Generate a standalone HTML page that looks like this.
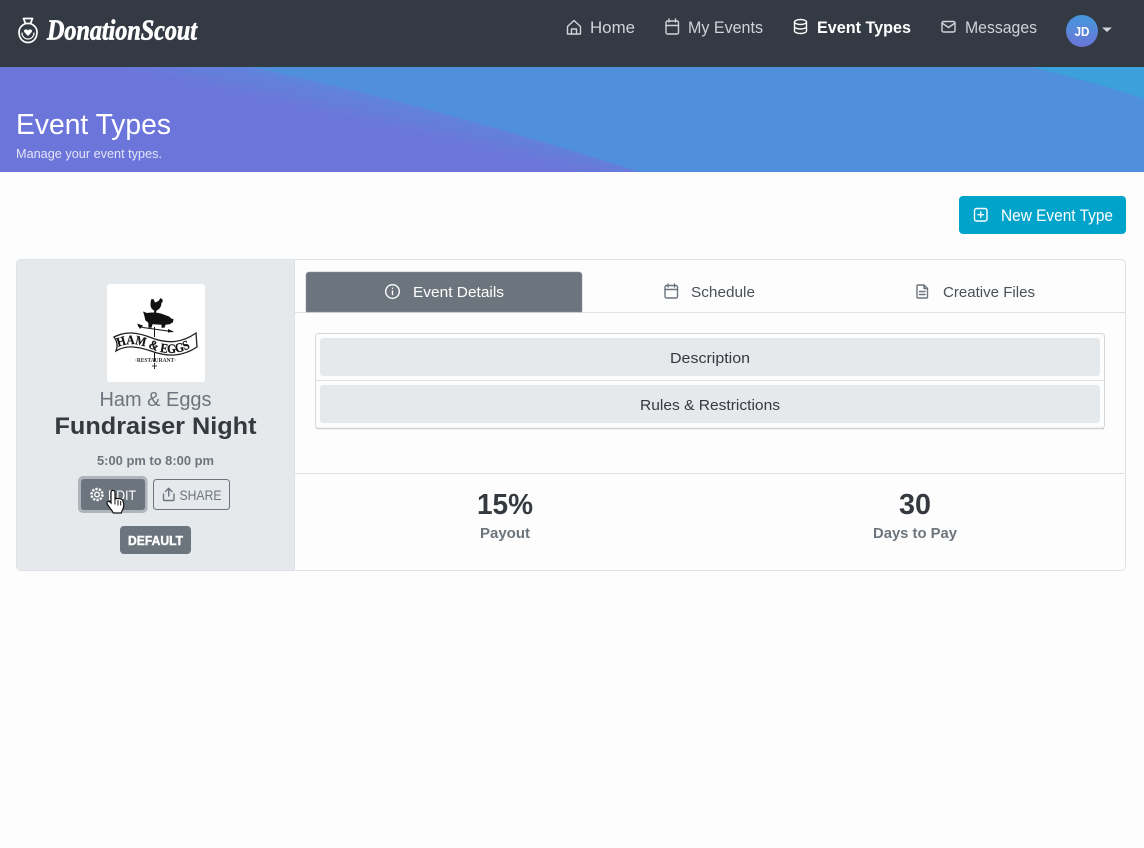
<!DOCTYPE html>
<html lang="en"><head><meta charset="utf-8"><title>Event Types</title>
<style>
html,body{margin:0;padding:0;background:#fdfdfd;width:1144px;height:848px;overflow:hidden}
svg{display:block}
text{font-family:"Liberation Sans",sans-serif}
.ic{fill:none;stroke-linecap:round;stroke-linejoin:round;stroke-width:1.4}
</style></head><body>
<svg width="1144" height="848" viewBox="0 0 1144 848" xmlns="http://www.w3.org/2000/svg">
<defs>
<linearGradient id="w" gradientUnits="userSpaceOnUse" x1="335" y1="120" x2="342" y2="89">
<stop offset="0" stop-color="#6c75d9"/><stop offset="1" stop-color="#5f84dc"/>
</linearGradient>
<linearGradient id="av" x1="0" y1="0" x2="0" y2="1"><stop offset="0" stop-color="#4598dc"/><stop offset="1" stop-color="#6b75d8"/></linearGradient>
</defs>
<rect width="1144" height="848" fill="#fdfdfd"/>
<!-- nav -->
<rect width="1144" height="67" fill="#343a43"/>
<g class="ic" stroke="#fff" style="stroke-width:1.7">
<path d="M23.500 18.500h9l-2 5c3.500 1.500 6.500 4.500 6.500 8.500 0 6-3.500 10.500-9 10.500s-9-4.500-9-10.500c0-4 3-7 6.500-8.500z"/>
<path d="M25 23.500h6"/>
<path d="M22 33a6 6 0 0 0 12 0" style="stroke-width:1.200"/>
</g>
<path d="M28 36l-3.600-3.700c-1.700-2.200 1.800-4.300 3.600-1.900 1.800-2.400 5.300-.3 3.600 1.900z" fill="#fff"/>
<text x="47" y="39.500" textLength="150" lengthAdjust="spacingAndGlyphs" fill="#fff" stroke="#fff" stroke-width=".7" style="font:italic bold 28px 'Liberation Serif',serif">DonationScout</text>

<g class="ic" stroke="#ced4da">
<path d="M567.500 26.500l6.500-6 6.500 6v7.500h-13z"/><path d="M571.500 34v-5h5v5"/>
<rect x="666" y="21" width="12.500" height="13" rx="1.500"/><path d="M666 25.500h12.500M669 19v3M675.500 19v3"/>
<rect x="942" y="21.500" width="13" height="10.500" rx="1.500"/><path d="M942 23l6.500 4.500 6.500-4.500"/>
</g>
<g class="ic" stroke="#fff">
<ellipse cx="800.500" cy="22" rx="6" ry="2.500"/><path d="M794.500 22v9c0 1.400 2.700 2.500 6 2.500s6-1.100 6-2.500v-9M794.500 26.500c0 1.400 2.700 2.500 6 2.500s6-1.100 6-2.500"/>
</g>
<g font-size="16.500" fill="#ced4da">
<text x="590" y="33" textLength="45" lengthAdjust="spacingAndGlyphs">Home</text>
<text x="688" y="33" textLength="75" lengthAdjust="spacingAndGlyphs">My Events</text>
<text x="965" y="33" textLength="72" lengthAdjust="spacingAndGlyphs">Messages</text>
</g>
<text x="817" y="33" font-size="16.500" font-weight="700" fill="#fff" textLength="94" lengthAdjust="spacingAndGlyphs">Event Types</text>
<circle cx="1082" cy="31" r="16" fill="url(#av)"/>
<text x="1082" y="36" font-size="13" font-weight="700" fill="#fff" text-anchor="middle" textLength="15" lengthAdjust="spacingAndGlyphs">JD</text>
<path d="M1102 27.500h10l-5 4.500z" fill="#ced4da"/>

<!-- banner -->
<rect y="67" width="1144" height="105" fill="#508fdb"/>
<path d="M1032 67H1144V99C1105 85 1070 77 1032 67z" fill="#3ca0da"/>
<path d="M0 67H250C350 88 450 112 640 172H0z" fill="url(#w)"/>
<text x="16" y="134" font-size="29" fill="#fff" textLength="155" lengthAdjust="spacingAndGlyphs">Event Types</text>
<text x="16" y="158" font-size="12.500" fill="#e2e4f6" textLength="146" lengthAdjust="spacingAndGlyphs">Manage your event types.</text>

<!-- new button -->
<rect x="959" y="196" width="167" height="38" rx="4" fill="#00a3c9"/>
<g class="ic" stroke="#fff"><rect x="974.500" y="208.500" width="12.500" height="12.500" rx="2"/><path d="M980.700 212v5.500M978 214.700h5.500"/></g>
<text x="1001" y="221" font-size="16.500" fill="#fff" textLength="112" lengthAdjust="spacingAndGlyphs">New Event Type</text>

<!-- card -->
<rect x="16.500" y="259.500" width="1109" height="311" rx="4" fill="#fdfdfd" stroke="#dee2e6"/>
<path d="M17 264a4 4 0 0 1 4-4H294.500V570H21a4 4 0 0 1-4-4z" fill="#e6e9ec"/>
<path d="M294.500 260V570" stroke="#dee2e6"/>

<!-- logo -->
<rect x="107" y="284" width="98" height="98" rx="3" fill="#fff"/>
<path d="M151 299.500l2.500-.5 1.500 3.500 3.500-1.500 2-3 2.500 2-.8 1 .8 1-1.500.5c0 4-2 7-5 8l-.5 2.500h-2l.2-2.500c-2.500-1-4-3.500-3.700-7z" fill="#111"/>
<path d="M143 311.500l4 1.500c5-1 10-.5 14 .5l8 3 3 2.500 1.500-.2-.5 3.500-3.500 2-4 .5-1 3h-3v-3l-9-.5-1 3.500h-3l-.2-5-3-2.500-1-4.800z" fill="#111"/>
<path d="M138 326l5 1.500 30 4.300" stroke="#111" stroke-width="1" fill="none"/>
<path d="M137 323.500l6 2-3 3.500zM168 329l6 2.700-6 .8z" fill="#111"/>
<path d="M154.500 327v10M154.500 352v10" stroke="#111" stroke-width="1"/>
<path d="M114 337C126 331 137 332 152 338C168 344 182 343 196 333L197 347C182 357 167 357 151 351C136 346 126 345 116 351C118 346 117 341 114 337z" fill="#fff" stroke="#222" stroke-width="1.300"/>
<path id="bn" d="M118 347C130 342 140 344 154 350C168 355 180 354 194 346" fill="none"/>
<text font-size="13" font-weight="700" fill="#111" stroke="#111" stroke-width=".25" style="font-family:'Liberation Serif',serif"><textPath href="#bn" textLength="75" lengthAdjust="spacingAndGlyphs">HAM &amp; EGGS</textPath></text>
<text x="135" y="362" font-size="6" font-weight="700" fill="#333" textLength="41" lengthAdjust="spacingAndGlyphs" style="font-family:'Liberation Serif',serif">·RESTAURANT·</text>
<path d="M154.500 363v6M152 366h5" stroke="#333" stroke-width="1"/>

<text x="155.500" y="406" font-size="20.500" fill="#6c757d" text-anchor="middle" textLength="112" lengthAdjust="spacingAndGlyphs">Ham &amp; Eggs</text>
<text x="155.500" y="434" font-size="24.500" font-weight="700" fill="#343a40" text-anchor="middle" textLength="202" lengthAdjust="spacingAndGlyphs">Fundraiser Night</text>
<text x="155.500" y="465" font-size="12.500" font-weight="700" fill="#6c757d" text-anchor="middle" textLength="117" lengthAdjust="spacingAndGlyphs">5:00 pm to 8:00 pm</text>

<!-- edit -->
<rect x="78" y="476" width="69.500" height="37" rx="5" fill="#aeb4ba"/>
<rect x="81" y="479" width="64" height="31" rx="3" fill="#6c757d"/>
<g class="ic" stroke="#fff"><circle cx="97" cy="494.500" r="2.300"/><circle cx="97" cy="494.500" r="5.500" stroke-dasharray="2.200 1.250" style="stroke-linecap:butt;stroke-width:2.400"/></g>
<text x="108" y="500" font-size="14" fill="#fff" textLength="28" lengthAdjust="spacingAndGlyphs">EDIT</text>
<!-- share -->
<rect x="153.500" y="479.500" width="76" height="30" rx="3" fill="none" stroke="#6c757d"/>
<g class="ic" stroke="#6c757d"><path d="M163.500 494v5.500a1 1 0 0 0 1 1h8.500a1 1 0 0 0 1-1V494M168.700 496V488.500M165.500 491.500l3.200-3.200 3.200 3.200"/></g>
<text x="179.500" y="500" font-size="14" fill="#6c757d" textLength="42" lengthAdjust="spacingAndGlyphs">SHARE</text>
<!-- cursor -->
<path d="M111 492.500c0-2.800 4-2.800 4 0v6.500c2.500-1 7.500-.5 8 2 .8 2 .8 5 .3 7-.5 2-2 3.500-2 5h-8c-1-2.500-5-6.500-6-9-1-2 1-3.500 2.500-2.200l1.200 1.200z" fill="#fff" stroke="#111" stroke-width="1.200"/>
<path d="M115 499v5.500M118 500v5.500M120.700 501v4.500" stroke="#111" stroke-width="1"/>
<!-- default -->
<rect x="120" y="526" width="71" height="28" rx="4" fill="#6c757d"/>
<text x="128" y="545" font-size="12.500" font-weight="700" fill="#fff" stroke="#fff" stroke-width=".4" textLength="55" lengthAdjust="spacingAndGlyphs">DEFAULT</text>

<!-- tabs -->
<path d="M295 312.500H1125" stroke="#dee2e6"/>
<path d="M306 275a3 3 0 0 1 3-3H579a3 3 0 0 1 3 3V312H306z" fill="#6c757d" stroke="#8a929a" stroke-width=".5"/>
<g class="ic" stroke="#fff"><circle cx="392.500" cy="291.500" r="6.800"/><path d="M392.500 291v3.500M392.500 288.200v.1"/></g>
<text x="413" y="297" font-size="15" fill="#fff" textLength="91" lengthAdjust="spacingAndGlyphs">Event Details</text>
<g class="ic" stroke="#6c757d"><rect x="665" y="285.500" width="12.500" height="12.500" rx="1.500"/><path d="M665 289.500h12.500M668 284v3M674.500 284v3"/>
<path d="M918 285h6l3.500 3.500V297a1 1 0 0 1-1 1H918a1 1 0 0 1-1-1v-11a1 1 0 0 1 1-1zM924 285v3.500h3.500M919.500 291.500h5.500M919.500 294.500h5.500"/></g>
<text x="691" y="297" font-size="15" fill="#495057" textLength="64" lengthAdjust="spacingAndGlyphs">Schedule</text>
<text x="943" y="297" font-size="15" fill="#495057" textLength="92" lengthAdjust="spacingAndGlyphs">Creative Files</text>

<!-- accordion -->
<rect x="315.500" y="333.500" width="789" height="95" rx="3" fill="#fdfdfd" stroke="#d5d8db"/>
<path d="M316 428.500H1104" stroke="#cfd2d5" stroke-width="1.500"/>
<path d="M316 380.500H1104" stroke="#dee0e2"/>
<rect x="320" y="338" width="780" height="38" rx="3" fill="#e6e9ec"/>
<rect x="320" y="385" width="780" height="38" rx="3" fill="#e6e9ec"/>
<text x="670" y="363" font-size="15" fill="#343a40" textLength="80" lengthAdjust="spacingAndGlyphs">Description</text>
<text x="640" y="410" font-size="15" fill="#343a40" textLength="140" lengthAdjust="spacingAndGlyphs">Rules &amp; Restrictions</text>

<!-- stats -->
<path d="M295 473.500H1125" stroke="#dee2e6"/>
<text x="477" y="514" font-size="29" font-weight="700" fill="#343a40" textLength="56" lengthAdjust="spacingAndGlyphs">15%</text>
<text x="899" y="514" font-size="29" font-weight="700" fill="#343a40" textLength="32" lengthAdjust="spacingAndGlyphs">30</text>
<text x="480" y="538" font-size="15" font-weight="700" fill="#6c757d" textLength="50" lengthAdjust="spacingAndGlyphs">Payout</text>
<text x="873" y="538" font-size="15" font-weight="700" fill="#6c757d" textLength="84" lengthAdjust="spacingAndGlyphs">Days to Pay</text>
</svg>
</body></html>
